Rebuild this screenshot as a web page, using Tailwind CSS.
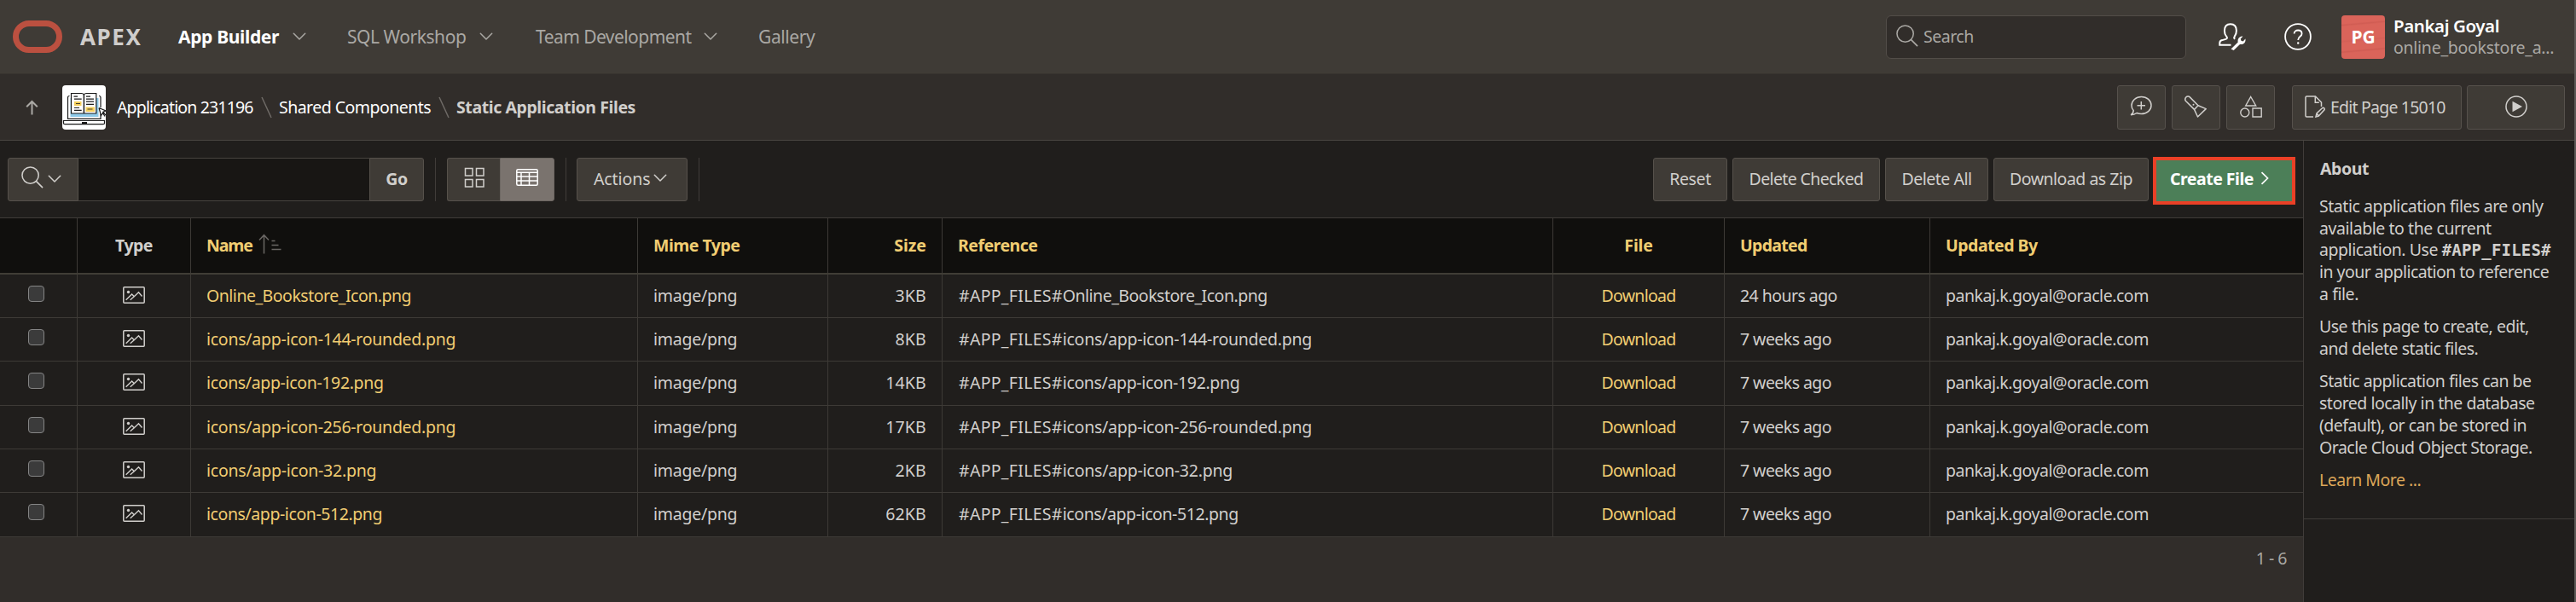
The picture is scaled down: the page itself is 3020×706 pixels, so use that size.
<!DOCTYPE html>
<html lang="en">
<head>
<meta charset="utf-8">
<title>Static Application Files</title>
<script src="https://cdn.jsdelivr.net/npm/@tailwindcss/browser@4"></script>
</head>
<body class="flex h-[706px] w-[3020px] overflow-hidden bg-[#201e1c] font-['Noto_Sans',sans-serif] text-[19.5px] leading-[26px] tracking-[-0.5px] whitespace-nowrap text-[#d1cfcc]">

<svg class="hidden">
  <symbol id="chev" viewBox="0 0 16 10"><path d="M1.3 1.3 8 8l6.700-6.700" fill="none" stroke="currentColor" stroke-width="1.500" stroke-linecap="round" stroke-linejoin="round"/></symbol>
  <symbol id="mag" viewBox="0 0 27 27"><circle cx="11" cy="11" r="10" fill="none" stroke="currentColor" stroke-width="1.600"/><path d="M18.200 18.200 26 26" fill="none" stroke="currentColor" stroke-width="1.800"/></symbol>
  <symbol id="pic" viewBox="0 0 26 20"><rect x=".8" y=".8" width="24.400" height="18.400" rx="1" fill="none" stroke="currentColor" stroke-width="1.500"/><circle cx="6.500" cy="6.500" r="1.700" fill="currentColor"/><path d="M3.700 15.700 10.600 9l2.700 2.700M8.700 15.700l4.600-4 5.200-4.900 4 4.700" fill="none" stroke="currentColor" stroke-width="1.400"/></symbol>
</svg>

<div class="flex w-[3018px] flex-col">

  <!-- Global header -->
  <header class="flex h-[87px] shrink-0 items-center border-b border-[#37332f] bg-[#3f3b36] pl-[15px] text-[21px] text-[#aaa8a4]">
    <svg class="h-[38px] w-[58px]" viewBox="0 0 58 38"><rect x="3.500" y="3.500" width="51" height="31" rx="15.500" fill="none" stroke="#bb5040" stroke-width="7"/></svg>
    <span class="ml-5 w-[116px] pl-px text-[26px] font-bold tracking-[1.6px] text-[#cfcdcb]">APEX</span>
    <span class="w-[134px] font-bold tracking-[-0.35px] text-white">App Builder</span>
    <svg class="h-[10px] w-4"><use href="#chev"/></svg>
    <span class="ml-[48px] w-[155px] tracking-[-0.45px]">SQL Workshop</span>
    <svg class="h-[10px] w-4"><use href="#chev"/></svg>
    <span class="ml-[50px] w-[197px] tracking-[-0.55px]">Team Development</span>
    <svg class="h-[10px] w-4"><use href="#chev"/></svg>
    <span class="ml-[48px] tracking-[-0.4px]">Gallery</span>

    <div class="ml-auto flex h-[51px] w-[352px] items-center rounded-[6px] border border-[#524d48] bg-[#312d2a] pl-[11px] text-[19.5px]">
      <svg class="mb-[2px] size-[26px]"><use href="#mag"/></svg>
      <span class="ml-[6px]">Search</span>
    </div>
    <svg class="ml-[38px] size-8 text-white" viewBox="0 0 32 32" fill="none" stroke="currentColor" stroke-width="2">
      <path d="M14.500 25.800H1.300v-2.300c0-2 1-3 3-3.400l4.200-1.200c1.500-.5 2-1.500.8-3C7.500 14 6.900 11.500 6.900 9c0-5 2.500-7.800 7-7.800s7 2.800 7 7.800c0 2.500-.6 4.800-2.100 6.700-1 1.500-.8 2.200.5 2.900"/>
      <path d="M14.500 30.500l8.200-8c-.8-3 .8-6.300 4.500-7l1.200.200-2.600 2.800.6 2.300 2.300.6 2.700-2.800c.900 4.400-2.800 7.200-6.400 6.300l-7.300 7z" fill="currentColor" stroke="none"/>
    </svg>
    <svg class="ml-[45px] size-8 text-white" viewBox="0 0 32 32" fill="none" stroke="currentColor" stroke-width="1.800">
      <circle cx="16" cy="16" r="14.900"/><path d="M11.600 12.600c0-2.600 1.900-4.100 4.500-4.100s4.500 1.600 4.500 4c0 3.400-4.400 3.300-4.400 7.400"/><circle cx="16.200" cy="23.500" r="1.200" fill="currentColor" stroke="none"/>
    </svg>
    <div class="ml-[35px] grid size-[51px] place-items-center rounded-[4px] bg-[linear-gradient(175deg,#da645a_18%,#d05c53_21%,#da645a_24%,#da645a_52%,#d46057_56%,#da645a_59%,#da645a_75%,#d05c53_78%,#da645a_81%)] text-[21px] font-bold tracking-normal text-white">PG</div>
    <div class="ml-[9px] flex w-[213px] flex-col text-[19.5px] leading-[25px]">
      <span class="pl-px text-[20.5px] font-semibold tracking-[-0.41px] text-white">Pankaj Goyal</span>
      <span class="pl-px tracking-[-0.26px]">online_bookstore_a...</span>
    </div>
  </header>

  <!-- Breadcrumb bar -->
  <div class="flex h-[78px] shrink-0 items-center border-b border-[#494541] bg-[#312d2a] pr-[11px] pl-[30px]">
    <svg class="h-[18px] w-[15px] text-[#aaa8a4]" viewBox="0 0 15 18" fill="none" stroke="currentColor" stroke-width="2"><path d="M7.500 17.500V2M1.200 8.300 7.500 2l6.300 6.300"/></svg>
    <svg class="ml-[28px] h-[52px] w-[51px] rounded-[4px] bg-white" viewBox="0 0 51 52" fill="none" stroke="#1b1b1b" stroke-width="1.200">
      <path d="M9.500 15h33v22h-33z" fill="#8fcbea" stroke="none"/>
      <path d="M8.500 12.500c-1.500 0-2 .8-2 2v24.800h38.500V30M43 12.500c1.500 0 2 .8 2 2V26"/>
      <path d="M10.500 9.500h12c1.500 0 2.500.8 2.900 1.800.4-1 1.400-1.800 2.900-1.800h11.500v23.500H10.500z" fill="#fff"/>
      <path d="M25.400 11v22" stroke-width="1.500"/>
      <path d="M14 19h8.500v5H14zM27.500 25.500H38v5.500H27.500z" fill="#f3cf5d" stroke="none"/>
      <path d="M13.500 13.200H18M14 16.200h8.700M14 26.500h6M14 29.300h8.700M28 13.200h5M28 16.200h9M28 19.200h9M28 22.300h9"/>
      <path d="M16 21.500h5M29.500 28h6" stroke-width=".8"/>
      <path d="M1.500 41.500h48v2.700c0 1-.5 1.500-1.500 1.500H3c-1 0-1.500-.5-1.500-1.500z" fill="#fff"/>
      <path d="M23 44h6" stroke-width="2.200"/>
      <path d="m43 26.500 8 3.500-3.200 1.200 3.200 4M43 26.500l2.500 9 2-3 2.500 4" fill="#fff"/>
    </svg>
    <span class="ml-[13px] w-[169px] tracking-[-0.84px] text-white">Application 231196</span>
    <svg class="h-[26px] w-[13px]" viewBox="0 0 13 26"><path d="M1 1l11 24" stroke="#6f6b67" stroke-width="1.500"/></svg>
    <span class="ml-[8px] w-[187px] tracking-[-0.53px] text-white">Shared Components</span>
    <svg class="h-[26px] w-[13px]" viewBox="0 0 13 26"><path d="M1 1l11 24" stroke="#6f6b67" stroke-width="1.500"/></svg>
    <span class="ml-[8px] font-bold tracking-[-0.41px]">Static Application Files</span>

    <div class="ml-auto grid h-[52px] w-[57px] place-items-center rounded-[3px] border border-[#56514c] bg-[#3f3b36]">
      <svg class="mr-[1px] mb-[2px] h-[25px] w-[26px]" viewBox="0 0 26 25" fill="none" stroke="currentColor" stroke-width="1.500"><path d="M4.200 17.600C2.800 16 2 14 2 11.800 2 6 7 1.500 13.500 1.500S25 6 25 11.500s-5 10-11.500 10c-2 0-3.800-.3-5.400-1-1.800 1.300-4.200 2.200-7 2.300 1.800-1 3-2.700 3.100-5.200z"/><path d="M13.300 7v9.500M8.500 11.700H18"/></svg>
    </div>
    <div class="ml-[7px] grid h-[52px] w-[57px] place-items-center rounded-[3px] border border-[#56514c] bg-[#3f3b36]">
      <svg class="mr-[1px] mb-[2px] size-[26px]" viewBox="0 0 26 26" fill="none" stroke="currentColor" stroke-width="1.500" stroke-linejoin="round"><path d="M1.800 6.800C.5 5.300.5 3.500 1.800 2.100s3.400-1.300 4.700 0L16 11.700l-4.500 4.700zM16 11.700l9.200 3.900-9.700 9.400-4-8.600"/><circle cx="10.500" cy="10.800" r="1" fill="currentColor" stroke="none"/></svg>
    </div>
    <div class="ml-[7px] grid h-[52px] w-[57px] place-items-center rounded-[3px] border border-[#56514c] bg-[#3f3b36]">
      <svg class="mb-[2px] ml-[1px] size-[26px]" viewBox="0 0 26 26" fill="none" stroke="currentColor" stroke-width="1.400"><path d="M12.700 1.500 18.700 12H6.700z"/><circle cx="5.800" cy="20" r="5"/><path d="M15 15h10.200v10H15z"/></svg>
    </div>
    <div class="ml-[20px] flex h-[52px] w-[199px] items-center rounded-[3px] border border-[#56514c] bg-[#3f3b36] pl-[14px]">
      <svg class="mb-[2px] h-[26px] w-6" viewBox="0 0 24 26" fill="none" stroke="currentColor" stroke-width="1.500"><path d="M10 25H2.200c-.8 0-1.200-.4-1.200-1.200V2.200C1 1.400 1.400 1 2.200 1h10.300L19.500 8v5"/><path d="M12.300 1v7.300h4.500"/><path d="M13 25l1-4 6.500-6.200c1.600-1.200 3.500.5 2.300 2.300L16.300 24zM14 21l2.300 3"/></svg>
      <span class="ml-[6px] tracking-[-0.79px]">Edit Page 15010</span>
    </div>
    <div class="ml-[6px] grid h-[52px] w-[115px] place-items-center rounded-[3px] border border-[#56514c] bg-[#3f3b36]">
      <svg class="mb-[2px] size-[26px]" viewBox="0 0 26 26"><circle cx="13" cy="13" r="12" fill="none" stroke="currentColor" stroke-width="1.500"/><path d="M8.500 6.800 20 13 8.500 19.200z" fill="currentColor"/></svg>
    </div>
  </div>

  <div class="flex grow">
    <main class="flex w-[2700px] flex-col">

      <!-- Report toolbar -->
      <div class="flex h-[90px] shrink-0 items-center pr-[9px] pl-[9px]">
        <div class="flex h-[51px] w-[83px] items-center rounded-l-[3px] border border-[#56514b] bg-[#3f3b36] pl-[15px]">
          <svg class="mb-1 size-[26px]"><use href="#mag"/></svg>
          <svg class="ml-[5px] h-[10px] w-4"><use href="#chev"/></svg>
        </div>
        <div class="h-[51px] w-[341px] border-y border-[#47433f] bg-[#181614]"></div>
        <div class="grid h-[51px] w-[64px] place-items-center rounded-r-[3px] border border-[#56514b] bg-[#3f3b36] font-bold">Go</div>
        <div class="ml-[13px] h-[51px] w-px bg-[#403c39]"></div>
        <div class="ml-[13px] grid h-[51px] w-[62px] place-items-center rounded-l-[3px] border border-r-0 border-[#56514b] bg-[#3f3b36]">
          <svg class="mb-1 size-6" viewBox="0 0 24 24" fill="none" stroke="currentColor" stroke-width="1.500"><path d="M1.500 1.500h8.500v8.500H1.500zM14.500 1.500H23v8.500h-8.500zM1.500 14.500h8.500V23H1.500zM14.500 14.500H23V23h-8.500z"/></svg>
        </div>
        <div class="grid h-[51px] w-[64px] place-items-center rounded-r-[3px] border border-[#6d6762] bg-[#7a736e] text-white">
          <svg class="mb-1 h-5 w-[26px]" viewBox="0 0 26 20" fill="none" stroke="currentColor" stroke-width="1.500"><rect x=".8" y=".8" width="24.400" height="18.400" rx="1.500"/><path d="M1 4.300h24M1 9h24M1 14h24M6 4.300V19M15.500 4.300V19"/></svg>
        </div>
        <div class="ml-[13px] h-[51px] w-px bg-[#403c39]"></div>
        <div class="ml-[12px] flex h-[51px] w-[130px] items-center rounded-[3px] border border-[#56514b] bg-[#3f3b36] pl-[19px]">
          <span class="w-[70px] tracking-[-0.1px]">Actions</span>
          <svg class="mb-[2px] h-[10px] w-4"><use href="#chev"/></svg>
        </div>
        <div class="ml-[13px] h-[51px] w-px bg-[#403c39]"></div>

        <div class="ml-auto flex items-center gap-[6px]">
          <div class="grid h-[51px] w-[87px] place-items-center rounded-[3px] border border-[#56514b] bg-[#3f3b36] tracking-[-0.38px]">Reset</div>
          <div class="grid h-[51px] w-[173px] place-items-center rounded-[3px] border border-[#56514b] bg-[#3f3b36] tracking-[-0.62px]">Delete Checked</div>
          <div class="grid h-[51px] w-[121px] place-items-center rounded-[3px] border border-[#56514b] bg-[#3f3b36]">Delete All</div>
          <div class="grid h-[51px] w-[182px] place-items-center rounded-[3px] border border-[#56514b] bg-[#3f3b36]">Download as Zip</div>
          <div class="mt-[3px] -ml-px flex h-[56px] w-[167px] items-center border-4 border-[#ea4026] bg-[#4c7f58] pb-[3px] pl-4 font-bold text-white">
            <span class="w-[106px]">Create File</span>
            <svg class="mb-[2px] h-4 w-[10px]" viewBox="0 0 10 16"><path d="M1.500 1.200 8.500 8l-7 6.800" fill="none" stroke="currentColor" stroke-width="1.700"/></svg>
          </div>
        </div>
      </div>

      <!-- Report -->
      <div class="grid h-[67px] shrink-0 grid-cols-[91px_133px_524px_223px_134px_716px_201px_241px_437px] border-t border-b-2 border-t-[#403c39] border-b-[#403d36] bg-[#100f0d] leading-[64px] font-bold text-[#f1cd72]">
        <div class="border-r border-[#3d3a36]"></div>
        <div class="border-r border-[#3d3a36] text-center text-[#d1cfcc]">Type</div>
        <div class="flex items-center border-r border-[#3d3a36] pl-[18px]">
          <span class="w-[61px] tracking-[-1.1px]">Name</span>
          <svg class="mb-1 h-6 w-[27px]" viewBox="0 0 27 24" fill="none" stroke="#6a6764" stroke-width="1.500"><path d="M6.500 23.500V2M1 7.500 6.500 1.700 12 7.500M15.500 8.500h4M15.500 13.500h8M15.500 18.500h11"/></svg>
        </div>
        <div class="border-r border-[#3d3a36] pl-[18px]">Mime Type</div>
        <div class="border-r border-[#3d3a36] pr-[18px] text-right tracking-normal">Size</div>
        <div class="border-r border-[#3d3a36] pl-[18px]">Reference</div>
        <div class="border-r border-[#3d3a36] text-center tracking-[-0.17px]">File</div>
        <div class="border-r border-[#3d3a36] pl-[18px] tracking-[-0.7px]">Updated</div>
        <div class="pl-[18px]">Updated By</div>
      </div>
      <div id="rows"></div>
      <div class="flex grow items-start justify-end bg-[#312d2a] pt-[12px] pr-[19px] text-[#aaa8a4]">1 - 6</div>
    </main>

    <!-- Help column -->
    <aside class="w-[318px] border-l border-[#403c39]">
      <div class="h-[444px] border-b border-[#403c39] pt-5 pl-[18px] leading-[25.8px]">
        <h2 class="pl-px font-bold tracking-[-0.41px]">About</h2>
        <p class="mt-[18px] tracking-[-0.44px]">Static application files are only<br>available to the current<br>application. Use <code class="font-['DejaVu_Sans_Mono',monospace] text-[19px] leading-none font-bold tracking-[0.2px]">#APP_FILES#</code><br><span class="tracking-[-0.55px]">in your application to reference</span><br>a file.</p>
        <p class="mt-[12.5px]">Use this page to create, edit,<br>and delete static files.</p>
        <p class="mt-[12.5px]">Static application files can be<br>stored locally in the database<br>(default), or can be stored in<br>Oracle Cloud Object Storage.</p>
        <p class="mt-[12.5px] text-[#dda759]">Learn More ...</p>
      </div>
    </aside>
  </div>
</div>
<div class="w-[2px] bg-[#5c5956]"></div>

<script>
const files = [
  ['Online_Bookstore_Icon.png', '3KB', '24 hours ago', 'h-[51px]', 'tracking-[-0.49px]'],
  ['icons/app-icon-144-rounded.png', '8KB', '7 weeks ago', 'h-[51px]', 'tracking-[-0.26px]'],
  ['icons/app-icon-192.png', '14KB', '7 weeks ago', 'h-[52px]', 'tracking-[-0.35px]'],
  ['icons/app-icon-256-rounded.png', '17KB', '7 weeks ago', 'h-[51px]', 'tracking-[-0.26px]'],
  ['icons/app-icon-32.png', '2KB', '7 weeks ago', 'h-[51px]', 'tracking-[-0.23px]'],
  ['icons/app-icon-512.png', '62KB', '7 weeks ago', 'h-[52px]', 'tracking-[-0.42px]']
];
document.getElementById('rows').innerHTML = files.map(([name, size, updated, height, tracking]) => `
  <div class="grid ${height} grid-cols-[91px_133px_524px_223px_134px_716px_201px_241px_437px] border-b border-[#3d3a36] leading-[50px]">
    <div class="border-r border-[#3d3a36] pt-[13px] pl-[33px]"><div class="size-[19px] rounded-[4px] border border-[#858585] bg-[#3b3b3b]"></div></div>
    <div class="border-r border-[#3d3a36] pt-[14px] pl-[53px]"><svg class="h-5 w-[26px]"><use href="#pic"/></svg></div>
    <div class="border-r border-[#3d3a36] pl-[18px] text-[#f1cd72] ${tracking}">${name}</div>
    <div class="border-r border-[#3d3a36] pl-[18px] tracking-[-0.25px]">image/png</div>
    <div class="border-r border-[#3d3a36] pr-[18px] text-right tracking-[0.2px]">${size}</div>
    <div class="border-r border-[#3d3a36] pl-[19px] ${tracking}"><span class="tracking-[0.3px]">#APP_FILES#</span>${name}</div>
    <div class="border-r border-[#3d3a36] text-center tracking-[-0.75px] text-[#f1cd72]">Download</div>
    <div class="border-r border-[#3d3a36] pl-[18px] tracking-[-0.55px]">${updated}</div>
    <div class="pl-[18px] tracking-[-0.46px]">pankaj.k.goyal@oracle.com</div>
  </div>`).join('');
</script>
</body>
</html>
